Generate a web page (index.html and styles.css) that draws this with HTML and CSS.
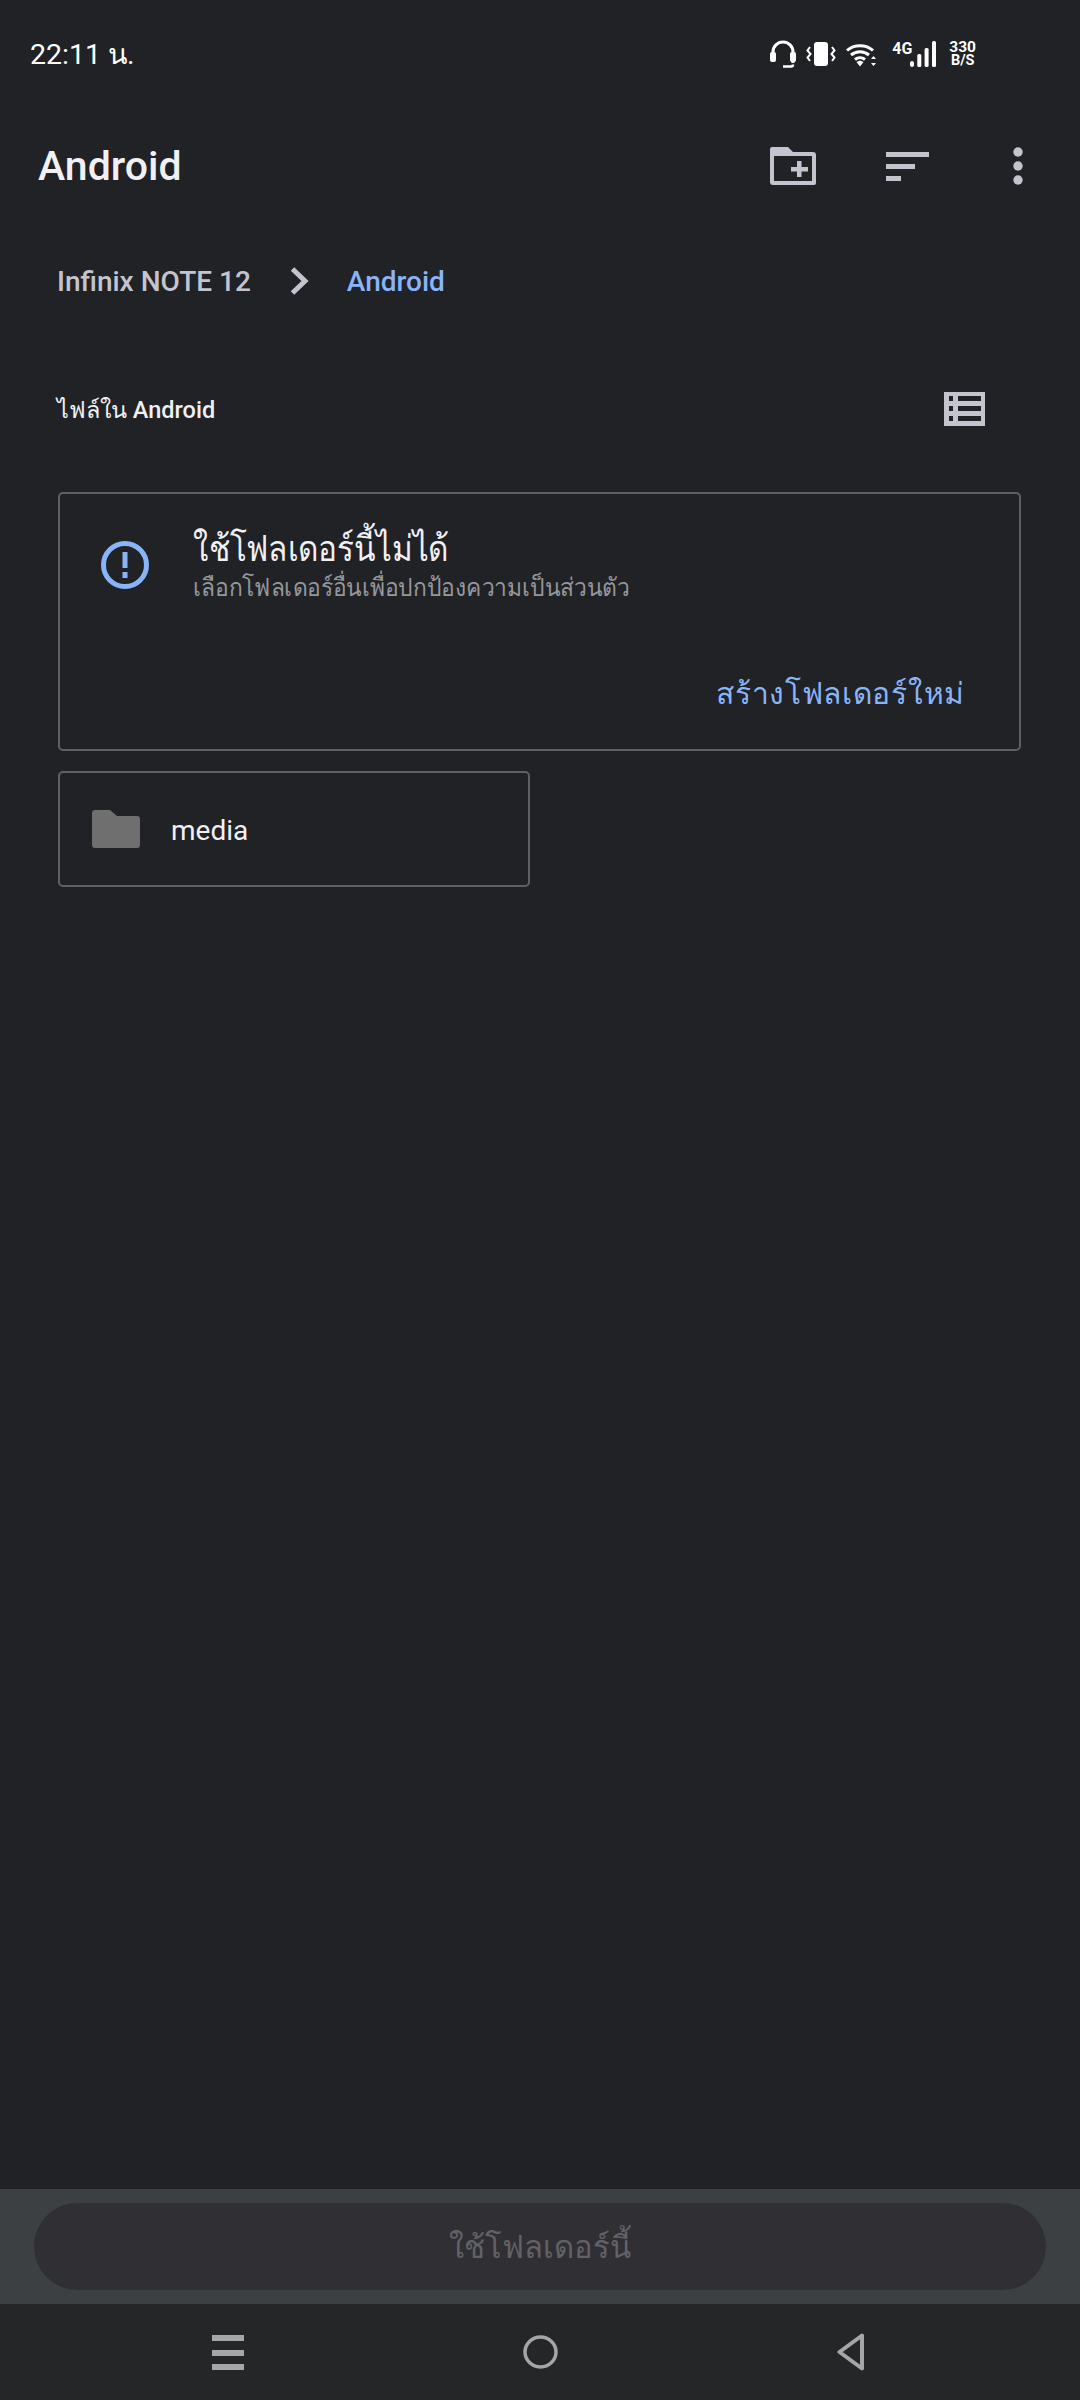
FILE: index.html
```html
<!DOCTYPE html>
<html lang="th">
<head>
<meta charset="utf-8">
<title>Android</title>
<link rel="stylesheet" href="styles.css">
</head>
<body>
<div class="screen">
  <div class="status">
    <span class="time">22:11 น.</span>
    <div class="status-icons">
      <svg class="ic-head" viewBox="0 0 26 28"><path d="M3 14V12a10 10 0 0 1 20 0v11" fill="none" stroke="#fff" stroke-width="3"/><rect x="0" y="12" width="6" height="10" rx="2" fill="#fff"/><rect x="20" y="12" width="6" height="10" rx="2" fill="#fff"/><path d="M13 26.500h8a2 2 0 0 0 2-2" fill="none" stroke="#fff" stroke-width="2.500"/></svg>
      <svg class="ic-vib" viewBox="0 0 30 24"><rect x="8" y="0" width="14" height="24" rx="3" fill="#fff"/><path d="M4 5 1.500 8.500 4.500 12 1.500 15.500 4 19M26 5l2.500 3.500-3 3.500 3 3.500L26 19" fill="none" stroke="#fff" stroke-width="2"/></svg>
      <svg class="ic-wifi" viewBox="0 0 31 25"><path d="M1 8.500C8 2 20 2 27 8.500M5 13c5.500-4.500 12.500-4.500 18 0M9 17.500c3-2.500 7-2.500 10 0" fill="none" stroke="#fff" stroke-width="3"/><path d="m10.500 20 3.500-1.500 3.500 1.500L14 24.500z" fill="#fff"/><path d="m27.500 14 2.500 3h-5zM27.500 24l2.500-3h-5z" fill="#fff"/></svg>
      <div class="net">
        <span class="net-label">4G</span>
        <svg class="ic-signal" viewBox="0 0 26 26"><rect x="0" y="20" width="4" height="6" rx="2" fill="#fff"/><rect x="7.300" y="13" width="4" height="13" rx="1.500" fill="#fff"/><rect x="14.600" y="7" width="4" height="19" rx="1.500" fill="#fff"/><rect x="22" y="0" width="4" height="26" rx="1.500" fill="#fff"/></svg>
      </div>
      <div class="speed"><span>330</span><span class="speed-unit">B/S</span></div>
    </div>
  </div>

  <header class="appbar">
    <h1 class="title">Android</h1>
    <div class="actions">
      <svg class="ic-newfolder" viewBox="0 0 48 40"><path d="M3 1h16l5 5h20a3 3 0 0 1 3 3v28a2 2 0 0 1-2 2H4a3 3 0 0 1-3-3V3a2 2 0 0 1 2-2z" fill="#c4c4cf"/><path d="M5 10h38v25H5z" fill="#202226"/><path d="M28 15h4.500v6H39v4.500h-6.500V31H28v-5.500h-6V21h6z" fill="#c4c4cf"/></svg>
      <svg class="ic-sort" viewBox="0 0 43 29"><path d="M0 0h43v5H0zM0 12h29v5H0zM0 24h15v5H0z" fill="#c4c4cf"/></svg>
      <svg class="ic-more" viewBox="0 0 10 38"><circle cx="5" cy="5" r="4.700" fill="#c4c4cf"/><circle cx="5" cy="19" r="4.700" fill="#c4c4cf"/><circle cx="5" cy="33" r="4.700" fill="#c4c4cf"/></svg>
    </div>
  </header>

  <nav class="crumbs">
    <span class="crumb">Infinix NOTE 12</span>
    <svg class="chev" viewBox="0 0 19 28"><path d="m2.500 2 12.500 12-12.500 12" fill="none" stroke="#c4c4cf" stroke-width="5"/></svg>
    <span class="crumb current">Android</span>
  </nav>

  <div class="section">
    <span class="section-label">ไฟล์ใน Android</span>
    <svg class="ic-list" viewBox="0 0 41 34"><rect width="41" height="34" fill="#c4c4cf"/><path d="M5 4h4v5H5zM14 4h23v5H14zM5 14h4v5H5zM14 14h23v5H14zM5 24h4v5H5zM14 24h23v5H14z" fill="#202226"/></svg>
  </div>

  <section class="notice">
    <div class="notice-body">
      <svg class="ic-alert" viewBox="0 0 48 48"><circle cx="24" cy="24" r="21.500" fill="none" stroke="#8ab4f8" stroke-width="5"/><path d="M21.500 11h5v16h-5zM21.500 31h5v6h-5z" fill="#8ab4f8"/></svg>
      <div class="notice-text">
        <div class="notice-title">ใช้โฟลเดอร์นี้ไม่ได้</div>
        <div class="notice-sub">เลือกโฟลเดอร์อื่นเพื่อปกป้องความเป็นส่วนตัว</div>
      </div>
    </div>
    <div class="notice-action">สร้างโฟลเดอร์ใหม่</div>
  </section>

  <div class="folder">
    <svg class="ic-folder" viewBox="0 0 48 38" preserveAspectRatio="none"><path d="M3 0h15l7 6h20a3 3 0 0 1 3 3v26a3 3 0 0 1-3 3H3a3 3 0 0 1-3-3V3a3 3 0 0 1 3-3z" fill="#6f6f6f"/></svg>
    <span class="folder-name">media</span>
  </div>

  <div class="spacer"></div>

  <div class="use-bar">
    <div class="use-btn">ใช้โฟลเดอร์นี้</div>
  </div>

  <div class="navbar">
    <svg class="nav-menu" viewBox="0 0 32 35"><path d="M0 0h32v6H0zM0 15h32v6H0zM0 29h32v6H0z" fill="#a6a6a6"/></svg>
    <svg class="nav-home" viewBox="0 0 35 34"><ellipse cx="17.500" cy="17" rx="15.500" ry="15" fill="none" stroke="#a6a6a6" stroke-width="3.500"/></svg>
    <svg class="nav-back" viewBox="0 0 28 38"><path d="M25 2.500v33L2.500 19z" fill="none" stroke="#a6a6a6" stroke-width="4" stroke-linejoin="round"/></svg>
  </div>
</div>
</body>
</html>
```

FILE: styles.css
```css
* { box-sizing: border-box; }
html, body { margin: 0; padding: 0; background: #202226; }
body { font-family: Roboto, "Noto Sans", "DejaVu Sans", sans-serif; }
.screen { width: 1080px; height: 2400px; display: flex; flex-direction: column; background: #202226; color: #fff; }

.status { height: 108px; display: flex; align-items: flex-start; justify-content: space-between; padding: 37px 104px 0 30px; flex: none; }
.time { font-size: 28.500px; line-height: 36px; }
.status-icons { display: flex; align-items: center; height: 30px; margin-top: 2px; }
.ic-head { width: 26px; height: 28px; }
.ic-vib { width: 30px; height: 24px; margin-left: 10px; }
.ic-wifi { width: 31px; height: 25px; margin-left: 10px; }
.net { display: flex; align-items: flex-end; margin-left: 15px; height: 26px; }
.net-label { font-size: 16px; font-weight: 700; line-height: 16px; align-self: flex-start; width: 18px; }
.ic-signal { width: 26px; height: 26px; }
.speed { display: flex; flex-direction: column; align-items: center; margin-left: 13px; font-size: 15.500px; line-height: 14px; font-weight: 700; }
.speed-unit { font-size: 14.500px; }

.appbar { display: flex; align-items: center; justify-content: space-between; height: 60px; margin-top: 28px; padding: 0 57px 0 38px; flex: none; }
.title { margin: 0; font-size: 41px; line-height: 60px; font-weight: 500; color: #f1f0f5; }
.actions { display: flex; align-items: center; }
.ic-newfolder { width: 48px; height: 40px; }
.ic-sort { width: 43px; height: 29px; margin-left: 69px; }
.ic-more { width: 10px; height: 38px; margin-left: 84px; }

.crumbs { display: flex; align-items: center; height: 50px; margin-top: 60px; padding-left: 57px; flex: none; }
.crumb { font-size: 28px; font-weight: 500; color: #c4c4cf; }
.crumb.current { color: #8ab4f8; }
.chev { width: 19px; height: 28px; margin: 0 38px 0 39px; }

.section { display: flex; align-items: center; justify-content: space-between; height: 50px; margin-top: 78px; padding: 0 95px 0 57px; flex: none; }
.section-label { font-size: 23.500px; font-weight: 500; color: #f1f0f5; }
.ic-list { width: 41px; height: 34px; }

.notice { margin: 58px 59px 0 58px; height: 259px; border: 2px solid #5f6064; border-radius: 5px; padding: 33px 54px 0 41px; display: flex; flex-direction: column; flex: none; }
.notice-body { display: flex; align-items: flex-start; }
.ic-alert { width: 48px; height: 48px; margin-top: 14px; flex: none; }
.notice-text { margin-left: 44px; }
.notice-title { font-size: 36px; line-height: 44px; color: #f1f0f5; transform: scaleX(.875); transform-origin: left center; white-space: nowrap; }
.notice-sub { font-size: 25px; line-height: 34px; color: #96979b; transform: scaleX(.913); transform-origin: left center; white-space: nowrap; }
.notice-action { margin-top: 67px; align-self: flex-end; font-size: 30px; line-height: 44px; color: #8ab4f8; letter-spacing: .7px; }

.folder { margin: 20px 0 0 58px; width: 472px; height: 116px; border: 2px solid #5f6064; border-radius: 5px; display: flex; align-items: center; padding-left: 32px; flex: none; }
.ic-folder { width: 48px; height: 38px; }
.folder-name { margin: 2px 0 0 31px; font-size: 28px; color: #f1f0f5; }

.spacer { flex: 1; }

.use-bar { height: 115px; background: #3c4043; padding: 14px 34px; flex: none; }
.use-btn { height: 87px; border-radius: 44px; background: #302f34; display: flex; align-items: center; justify-content: center; font-size: 31px; color: #626266; }

.navbar { height: 96px; background: #252628; display: flex; align-items: center; padding: 0 215px 0 212px; justify-content: space-between; flex: none; }
.nav-menu { width: 32px; height: 35px; }
.nav-home { width: 35px; height: 34px; }
.nav-back { width: 28px; height: 38px; }
```
